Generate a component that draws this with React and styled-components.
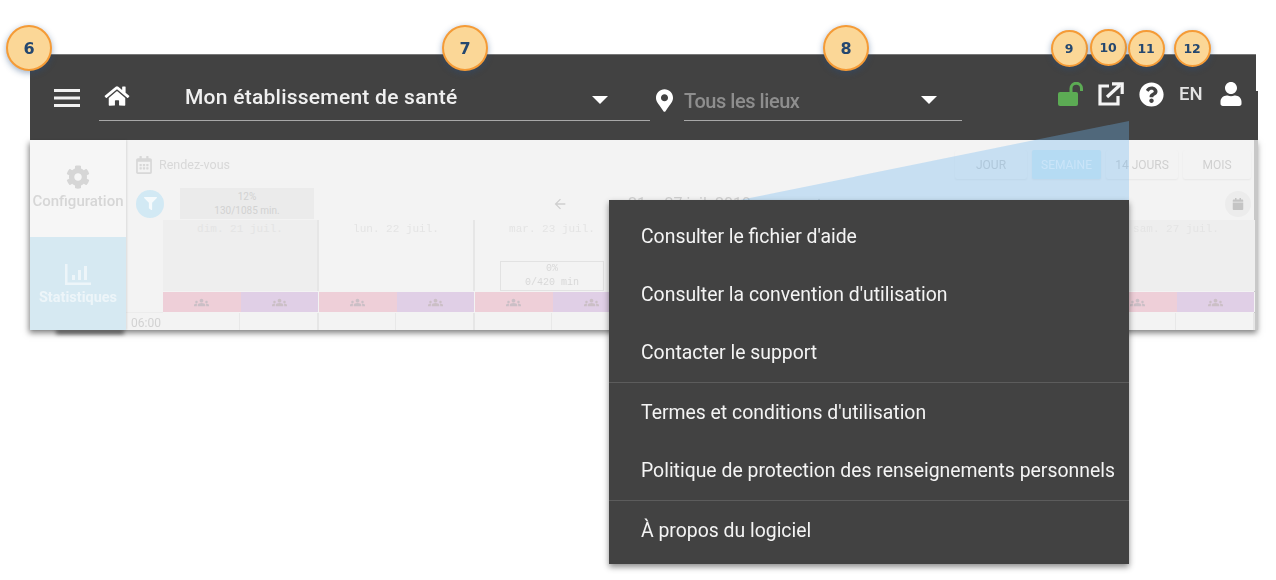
import styled, { createGlobalStyle } from "styled-components";
import {
  FaHome,
  FaMapMarkerAlt,
  FaQuestionCircle,
  FaUser,
  FaCog,
  FaFilter,
  FaRegCalendarAlt,
  FaCalendar,
} from "react-icons/fa";
import { MdArrowBack, MdArrowForward, MdGroups } from "react-icons/md";

const GlobalStyle = createGlobalStyle`
  body {
    margin: 0;
    background: #fff;
    font-family: Roboto, "Liberation Sans", sans-serif;
  }
`;

const Page = styled.div`
  position: relative;
  width: 1276px;
  height: 580px;
  padding: 54px 18px 0 30px;
  box-sizing: border-box;
  overflow: hidden;
`;

const Frame = styled.div`
  display: flex;
  flex-direction: column;
  height: 276px;
  filter: blur(0.45px);
`;

const Toolbar = styled.header`
  position: relative;
  display: flex;
  align-items: center;
  flex: 0 0 86px;
  margin-right: 2px;
  padding-left: 24px;
  box-sizing: border-box;
  background: #424242;
  color: #fff;
  border-top: 1px solid #777;
  &::after {
    content: "";
    position: absolute;
    right: -2px;
    top: 36px;
    bottom: 0;
    width: 2px;
    background: #424242;
  }
`;

const MenuBars = styled.svg`
  flex: none;
  width: 26px;
  height: 18px;
  margin-right: 19px;
`;

const Select = styled.div`
  display: flex;
  align-items: center;
  width: ${(p) => p.$width}px;
  height: 45px;
  margin-top: 2px;
  box-sizing: border-box;
  border-bottom: 1px solid #a8a8a8;
  padding-bottom: 2px;
`;

const HomeIcon = styled(FaHome)`
  flex: none;
  width: 26px;
  height: 22px;
  margin: 0 55px 3px 5px;
`;

const SelectText = styled.span`
  flex: 1;
  font-size: ${(p) => (p.$muted ? 20 : 21)}px;
  font-weight: 500;
  white-space: nowrap;
  margin-top: ${(p) => (p.$muted ? 8 : 0)}px;
  margin-bottom: ${(p) => (p.$muted ? 0 : 1)}px;
  color: ${(p) => (p.$muted ? "#8e8e8e" : "#f0f0f0")};
  letter-spacing: ${(p) => (p.$muted ? "-0.45px" : "0.25px")};
`;

const Caret = styled.span`
  flex: none;
  width: 0;
  height: 0;
  margin: ${(p) => p.$top}px ${(p) => p.$right}px 0 0;
  border-left: 8px solid transparent;
  border-right: 8px solid transparent;
  border-top: 8px solid #fff;
`;

const PinIcon = styled(FaMapMarkerAlt)`
  flex: none;
  width: 17px;
  height: 23px;
  margin: 6px 11px 0 6px;
`;

const ToolIcons = styled.div`
  display: flex;
  align-items: center;
  margin-left: 96px;
  margin-bottom: 7px;
`;

const LockIcon = styled.svg`
  width: 26px;
  height: 24px;
  margin-right: 14px;
`;

const LinkIcon = styled.svg`
  width: 26px;
  height: 24px;
  margin-right: 15px;
`;

const HelpIcon = styled(FaQuestionCircle)`
  width: 25px;
  height: 25px;
  margin-right: 15px;
`;

const Lang = styled.span`
  font-size: 18.5px;
  font-weight: 500;
  color: #e4e4e4;
  margin-right: 17px;
`;

const UserIcon = styled(FaUser)`
  width: 22px;
  height: 24px;
`;

const Body = styled.div`
  display: flex;
  flex: 1;
  background: #f3f3f3;
  border-right: 4px solid #c8c8c8;
  box-shadow: -1px 3px 6px rgba(0, 0, 0, 0.5);
`;

const Side = styled.nav`
  position: relative;
  display: flex;
  flex-direction: column;
  flex: 0 0 96px;
  box-shadow: 1px 0 2px rgba(0, 0, 0, 0.1);
  &::after {
    content: "";
    position: absolute;
    left: 26px;
    right: 2px;
    bottom: -4px;
    height: 4px;
    background: #666;
    filter: blur(2px);
    z-index: -1;
  }
`;

const SideItem = styled.div`
  display: flex;
  flex-direction: column;
  align-items: center;
  height: ${(p) => (p.$active ? 93 : 97)}px;
  padding-top: ${(p) => (p.$active ? 27 : 25)}px;
  box-sizing: border-box;
  background: ${(p) => (p.$active ? "#d6e9f2" : "#f6f6f6")};
  color: ${(p) => (p.$active ? "#edf5f9" : "#d6d6d6")};
  font-size: ${(p) => (p.$active ? 14.5 : 15)}px;
  line-height: 17px;
  gap: 4px;
  white-space: nowrap;
  font-weight: ${(p) => (p.$active ? 700 : 500)};
`;

const GearIcon = styled(FaCog)`
  width: 24px;
  height: 24px;
`;

const ChartIcon = styled.svg`
  width: 26px;
  height: 21px;
`;

const Main = styled.main`
  flex: 1;
  min-width: 0;
  display: flex;
  flex-direction: column;
`;

const TitleRow = styled.div`
  display: flex;
  align-items: center;
  flex: 0 0 47px;
  padding: 2px 3px 0 10px;
  box-sizing: border-box;
  color: #d8d8d8;
  font-size: 12.5px;
`;

const TitleIcon = styled(FaRegCalendarAlt)`
  width: 16px;
  height: 18px;
  margin-right: 7px;
`;

const ViewTabs = styled.div`
  display: flex;
  gap: 5px;
  margin-left: auto;
`;

const ViewTab = styled.div`
  display: flex;
  align-items: center;
  justify-content: center;
  width: ${(p) => p.$width}px;
  height: 29px;
  font-size: 12px;
  border-radius: 2px;
  background: ${(p) => (p.$active ? "#d9edf5" : "#f3f3f3")};
  color: ${(p) => (p.$active ? "#f7fbfd" : "#d0d0d0")};
  box-shadow: 0 1px 2px rgba(0, 0, 0, 0.05);
`;

const FilterRow = styled.div`
  display: flex;
  align-items: center;
  flex: 0 0 33px;
  padding: 0 3px 0 10px;
`;

const FilterButton = styled.div`
  display: flex;
  align-items: center;
  justify-content: center;
  width: 28px;
  height: 28px;
  border-radius: 50%;
  background: #d2e9f4;
  color: #f5fafc;
`;

const Occupancy = styled.div`
  width: 134px;
  height: 31px;
  margin-left: 16px;
  background: #ebebeb;
  color: #d2d2d2;
  font-size: 10px;
  line-height: 14px;
  text-align: center;
  padding-top: 2px;
  box-sizing: border-box;
`;

const WeekNav = styled.div`
  display: flex;
  align-items: center;
  margin-left: 238px;
  color: #cfcfcf;
  font-size: 16px;
  white-space: nowrap;
  gap: 60px;
`;

const CalendarButton = styled.div`
  display: flex;
  align-items: center;
  justify-content: center;
  width: 26px;
  height: 26px;
  margin-left: auto;
  border-radius: 50%;
  background: #ececec;
  color: #c4c4c4;
`;

const Grid = styled.div`
  flex: 1;
  display: grid;
  grid-template-columns: 37px repeat(7, 156px);
  grid-template-rows: 71px 21px 1fr;
`;

const DayHead = styled.div`
  position: relative;
  background: ${(p) => (p.$weekend ? "#eeeeee" : "transparent")};
  border-right: 2px solid ${(p) => (p.$last ? "transparent" : "#e6e6e6")};
  color: #e4e4e4;
  font-family: "Liberation Mono", monospace;
  font-size: 11px;
  line-height: 18px;
  text-align: center;
`;

const DayLoad = styled.div`
  position: absolute;
  left: 25px;
  bottom: 0;
  width: 104px;
  height: 30px;
  box-sizing: border-box;
  border: 1px solid #e2e2e2;
  color: #d8d8d8;
  font-size: 10px;
  line-height: 14px;
`;

const Gutter = styled.div`
  border-top: ${(p) => (p.$line ? "1px solid #ececec" : "none")};
  color: #d2d2d2;
  font-size: 12px;
  padding: ${(p) => (p.$line ? "3px 0 0 5px" : "0")};
  overflow: hidden;
`;

const BandPair = styled.div`
  display: grid;
  grid-template-columns: 1fr 1fr;
  margin-top: 1px;
  border-right: 1px solid #f3f3f3;
`;

const Band = styled.div`
  display: flex;
  align-items: center;
  justify-content: center;
  background: ${(p) => (p.$purple ? "#e0cfe6" : "#eecfd8")};
  color: #cbbfc6;
  font-size: 15px;
`;

const SlotPair = styled.div`
  display: grid;
  grid-template-columns: 1fr 1fr;
  margin-top: 1px;
  border-right: 2px solid #e6e6e6;
  & > div:first-child {
    border-right: 1px solid #e8e8e8;
  }
`;

const Wedge = styled.div`
  position: absolute;
  left: 740px;
  top: 121px;
  width: 389px;
  height: 79px;
  background: rgba(108, 183, 240, 0.33);
  clip-path: polygon(100% 0, 100% 100%, 0 100%);
`;

const HelpMenu = styled.ul`
  position: absolute;
  left: 609px;
  top: 200px;
  width: 520px;
  height: 364px;
  margin: 0;
  padding: 7px 0 0;
  box-sizing: border-box;
  list-style: none;
  background: #424242;
  box-shadow: 0 3px 6px rgba(0, 0, 0, 0.45);
  color: #fff;
`;

const MenuItem = styled.li`
  display: flex;
  align-items: center;
  height: 58px;
  padding-left: 32px;
  font-size: 19.4px;
  white-space: nowrap;
  color: #f4f4f4;
`;

const MenuDivider = styled.li`
  height: 1px;
  margin-top: 1px;
  background: #5c5c5c;
`;

const Callout = styled.div`
  position: absolute;
  left: ${(p) => p.$x - p.$size / 2}px;
  top: ${(p) => p.$y - p.$size / 2}px;
  display: flex;
  align-items: center;
  justify-content: center;
  width: ${(p) => p.$size}px;
  height: ${(p) => p.$size}px;
  box-sizing: border-box;
  border: 2px solid #f59b36;
  border-radius: 50%;
  background: #fbd797;
  box-shadow: 0 2px 6px rgba(40, 80, 130, 0.45);
  color: #24476f;
  font-family: "DejaVu Sans", sans-serif;
  font-weight: 700;
  font-size: ${(p) => (p.$size > 40 ? 16 : 12.5)}px;
  letter-spacing: -0.3px;
`;

const days = [
  { id: "dim", label: "dim. 21 juil.", weekend: true },
  { id: "lun", label: "lun. 22 juil." },
  { id: "mar", label: "mar. 23 juil.", load: true },
  { id: "mer" },
  { id: "jeu" },
  { id: "ven" },
  { id: "sam", label: "sam. 27 juil.", weekend: true, last: true },
];

const callouts = [
  { n: 6, x: 29, y: 48, size: 46 },
  { n: 7, x: 465, y: 48, size: 46 },
  { n: 8, x: 846, y: 48, size: 46 },
  { n: 9, x: 1069, y: 48, size: 37 },
  { n: 10, x: 1108, y: 47, size: 37 },
  { n: 11, x: 1146, y: 48, size: 37 },
  { n: 12, x: 1192, y: 48, size: 37 },
];

const menuGroups = [
  [
    "Consulter le fichier d'aide",
    "Consulter la convention d'utilisation",
    "Contacter le support",
  ],
  ["Termes et conditions d'utilisation", "Politique de protection des renseignements personnels"],
  ["À propos du logiciel"],
];

export default function App() {
  return (
    <Page>
      <GlobalStyle />
      <Frame>
        <Toolbar>
          <MenuBars viewBox="0 0 26 18" fill="#f2f2f2">
            <rect y="0" width="26" height="3" />
            <rect y="7.5" width="26" height="3" />
            <rect y="15" width="26" height="3" />
          </MenuBars>
          <Select $width={551}>
            <HomeIcon />
            <SelectText>Mon établissement de santé</SelectText>
            <Caret $top={5} $right={42} />
          </Select>
          <PinIcon />
          <Select $width={278}>
            <SelectText $muted>Tous les lieux</SelectText>
            <Caret $top={5} $right={25} />
          </Select>
          <ToolIcons>
            <LockIcon viewBox="0 0 26 24">
              <rect x="0" y="10" width="20" height="14" rx="2" fill="#5cab54" />
              <path d="M13 11V6.5a5 5 0 0 1 10.5 0V9" fill="none" stroke="#5cab54" strokeWidth="3" />
            </LockIcon>
            <LinkIcon viewBox="0 0 26 24" fill="none" stroke="#f4f4f4" strokeWidth="3.2">
              <path d="M11 4H2v18h18v-8" />
              <path d="M9 15L22 3" />
              <path d="M14 1.8h10.2V12" />
            </LinkIcon>
            <HelpIcon />
            <Lang>EN</Lang>
            <UserIcon />
          </ToolIcons>
        </Toolbar>
        <Body>
          <Side>
            <SideItem>
              <GearIcon />
              Configuration
            </SideItem>
            <SideItem $active>
              <ChartIcon viewBox="0 0 26 21" fill="#edf5f9">
                <path d="M0 0h2.5v18.5H26V21H0z" />
                <rect x="7" y="11" width="3" height="5" />
                <rect x="13" y="6" width="3" height="10" />
                <rect x="19" y="2" width="3" height="14" />
              </ChartIcon>
              Statistiques
            </SideItem>
          </Side>
          <Main>
            <TitleRow>
              <TitleIcon />
              Rendez-vous
              <ViewTabs>
                <ViewTab $width={72}>JOUR</ViewTab>
                <ViewTab $width={69} $active>SEMAINE</ViewTab>
                <ViewTab $width={72}>14 JOURS</ViewTab>
                <ViewTab $width={68}>MOIS</ViewTab>
              </ViewTabs>
            </TitleRow>
            <FilterRow>
              <FilterButton>
                <FaFilter size={13} />
              </FilterButton>
              <Occupancy>
                12%
                <br />
                130/1085 min.
              </Occupancy>
              <WeekNav>
                <MdArrowBack size={16} />
                <span>21 – 27 juil. 2019</span>
                <MdArrowForward size={16} />
              </WeekNav>
              <CalendarButton>
                <FaCalendar size={12} />
              </CalendarButton>
            </FilterRow>
            <Grid>
              <Gutter />
              {days.map((d) => (
                <DayHead key={d.id} $weekend={d.weekend} $last={d.last}>
                  {d.label}
                  {d.load && (
                    <DayLoad>
                      0%
                      <br />
                      0/420 min
                    </DayLoad>
                  )}
                </DayHead>
              ))}
              <Gutter />
              {days.map((d) => (
                <BandPair key={d.id}>
                  <Band><MdGroups /></Band>
                  <Band $purple><MdGroups /></Band>
                </BandPair>
              ))}
              <Gutter $line>06:00</Gutter>
              {days.map((d) => (
                <SlotPair key={d.id}>
                  <div />
                  <div />
                </SlotPair>
              ))}
            </Grid>
          </Main>
        </Body>
      </Frame>
      <Wedge />
      <HelpMenu>
        {menuGroups.map((group, i) => [
          i > 0 && <MenuDivider key={"d" + i} />,
          ...group.map((label) => <MenuItem key={label}>{label}</MenuItem>),
        ])}
      </HelpMenu>
      {callouts.map((c) => (
        <Callout key={c.n} $x={c.x} $y={c.y} $size={c.size}>
          {c.n}
        </Callout>
      ))}
    </Page>
  );
}
